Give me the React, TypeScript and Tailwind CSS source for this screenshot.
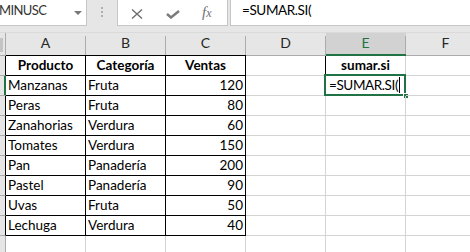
import React from "react";

const FONT = { fontFamily: "Lato, 'Open Sans', sans-serif" };

type Row = [string, string, string];
const data: Row[] = [
  ["Manzanas", "Fruta", "120"],
  ["Peras", "Fruta", "80"],
  ["Zanahorias", "Verdura", "60"],
  ["Tomates", "Verdura", "150"],
  ["Pan", "Panadería", "200"],
  ["Pastel", "Panadería", "90"],
  ["Uvas", "Fruta", "50"],
  ["Lechuga", "Verdura", "40"],
];

function HeaderCell({ letter, active, bottom }: { letter: string; active?: boolean; bottom: string }) {
  return (
    <div
      className={`relative flex w-[80px] h-[23px] shrink-0 border-b ${bottom} ${active ? "bg-[#d2d2d2]" : ""}`}
    >
      <div
        className={`flex-1 flex items-end justify-center pb-[3px] text-[14px] leading-[18px] ${
          active ? "text-[#217346]" : "text-[#262626]"
        }`}
      >
        {letter}
      </div>
      <div className="w-px h-[19px] self-end bg-[#ababab]" />
      {active && <div className="absolute left-0 right-0 bottom-[-1px] h-[2px] bg-[#217346]" />}
    </div>
  );
}

function Cell({
  children,
  right,
  bottom,
  align = "left",
  bold,
}: {
  children?: React.ReactNode;
  right: string;
  bottom: string;
  align?: "left" | "center" | "right";
  bold?: boolean;
}) {
  const j = align === "left" ? "justify-start pl-[2px]" : align === "center" ? "justify-center" : "justify-end pr-[2px]";
  return (
    <div
      className={`relative flex items-end ${j} w-[80px] h-[20px] shrink-0 border-r border-b ${right} ${bottom} pb-[1px] text-[13.5px] leading-[18px] text-black whitespace-nowrap overflow-visible ${
        bold ? "font-bold" : ""
      }`}
    >
      {children}
    </div>
  );
}

export default function App() {
  const BR = "border-r-black";
  const BB = "border-b-black";
  const GR = "border-r-[#d4d4d4]";
  const GB = "border-b-[#d4d4d4]";

  return (
    <div className="w-[470px] h-[252px] overflow-hidden bg-white" style={FONT}>
      {/* Top bar */}
      <div className="h-[33px] bg-[#e6e6e6] flex items-start">
        <div className="flex h-[26px] w-full">
          <div className="relative w-[87px] h-[26px] bg-white border-r border-b border-[#c6c6c6] flex items-end pb-[6px] shrink-0">
            <span className="text-[13px] leading-[18px] text-[#333] ml-[-1px] tracking-[-0.6px]">MINUSC</span>
            <svg className="absolute left-[74px] top-[11px]" width="8" height="4" viewBox="0 0 8 4">
              <polygon points="0,0 8,0 4,4" fill="#777" />
            </svg>
          </div>
          <div className="w-[30px] shrink-0 flex flex-col items-center pt-[7px] gap-[2px]">
            <div className="w-[2px] h-[2px] bg-[#b0b0b0] ml-[-1px]" />
            <div className="w-[2px] h-[2px] bg-[#b0b0b0] ml-[-1px]" />
            <div className="w-[2px] h-[2px] bg-[#b0b0b0] ml-[-1px]" />
          </div>
          <div className="relative w-[111px] h-[26px] bg-white border border-t-0 border-[#c6c6c6] shrink-0">
            <svg className="absolute left-[13px] top-[9px]" width="12" height="10" viewBox="0 0 12 10">
              <path d="M1 0.5 L11 9.5 M11 0.5 L1 9.5" stroke="#6e6e6e" strokeWidth="1.4" fill="none" />
            </svg>
            <svg className="absolute left-[48px] top-[10px]" width="14" height="9" viewBox="0 0 14 9">
              <path d="M1 4 L5 7.5 L13 1" stroke="#7a7a7a" strokeWidth="2.4" fill="none" />
            </svg>
            <span
              className="absolute left-[84px] top-[3px] text-[15px] leading-[18px] italic text-[#707070]"
              style={{ fontFamily: "'Liberation Serif', serif" }}
            >
              f<span className="text-[12px]">x</span>
            </span>
          </div>
          <div className="w-[2px] shrink-0" />
          <div className="flex-1 h-[26px] bg-white border-l border-b border-[#c6c6c6] flex items-end pb-[6px] pl-[11px]">
            <span className="text-[13.5px] leading-[18px] text-black tracking-[-0.4px]">=SUMAR.SI(</span>
          </div>
        </div>
      </div>

      {/* Column header */}
      <div className="flex h-[23px] bg-[#e6e6e6] border-t border-[#dadada] box-content -mt-px">
        <div className="relative w-[6px] h-[23px] shrink-0 border-r border-b border-[#ababab]">
          <div className="absolute left-0 top-[5px] w-[3px] h-[14px] bg-[#c4c4c4]" />
        </div>
        <HeaderCell letter="A" bottom="border-b-black" />
        <HeaderCell letter="B" bottom="border-b-black" />
        <HeaderCell letter="C" bottom="border-b-black" />
        <HeaderCell letter="D" bottom="border-b-[#ababab]" />
        <HeaderCell letter="E" active bottom="border-b-[#ababab]" />
        <HeaderCell letter="F" bottom="border-b-[#ababab]" />
      </div>

      {/* Row 1 */}
      <div className="flex">
        <div className="w-[6px] h-[20px] shrink-0 bg-[#e6e6e6] border-r border-b border-r-black border-b-[#ababab]" />
        <Cell right={BR} bottom={BB} align="center" bold>Producto</Cell>
        <Cell right={BR} bottom={BB} align="center" bold>Categoría</Cell>
        <Cell right={BR} bottom={BB} align="center" bold>Ventas</Cell>
        <Cell right={BR} bottom={GB} />
        <Cell right={GR} bottom={GB} align="center" bold>sumar.si</Cell>
        <Cell right={GR} bottom={GB} />
      </div>

      {data.map((r, i) => (
        <div className="flex" key={i}>
          <div
            className={`relative w-[6px] h-[20px] shrink-0 bg-[#e6e6e6] border-r border-b border-b-[#ababab] ${
              i === 0 ? "border-r-[#217346]" : "border-r-black"
            }`}
          >
            {i === 0 && <div className="absolute right-0 top-0 bottom-0 w-px bg-[#217346]" />}
          </div>
          <Cell right={BR} bottom={BB}>{r[0]}</Cell>
          <Cell right={BR} bottom={BB}>{r[1]}</Cell>
          <Cell right={BR} bottom={BB} align="right">{r[2]}</Cell>
          <Cell right={GR} bottom={GB} />
          {i === 0 ? (
            <Cell right={GR} bottom={GB}>
              <span className="ml-px tracking-[-0.4px]">=SUMAR.SI(</span>
              <span className="w-px h-[16px] bg-black ml-[1px] mb-px" />
              <div className="absolute left-[-2px] top-[-2px] w-[82px] h-[22px] border-2 border-[#217346] pointer-events-none" />
              <div className="absolute right-[-4px] bottom-[-4px] w-[6px] h-[6px] bg-[#217346] border border-white" />
            </Cell>
          ) : (
            <Cell right={GR} bottom={GB} />
          )}
          <Cell right={GR} bottom={GB} />
        </div>
      ))}

      {/* Row 10 */}
      <div className="flex">
        <div className="w-[6px] h-[20px] shrink-0 bg-[#e6e6e6] border-r border-b border-[#ababab]" />
        {[0, 1, 2, 3, 4, 5].map((k) => (
          <Cell key={k} right={GR} bottom={GB} />
        ))}
      </div>
    </div>
  );
}
